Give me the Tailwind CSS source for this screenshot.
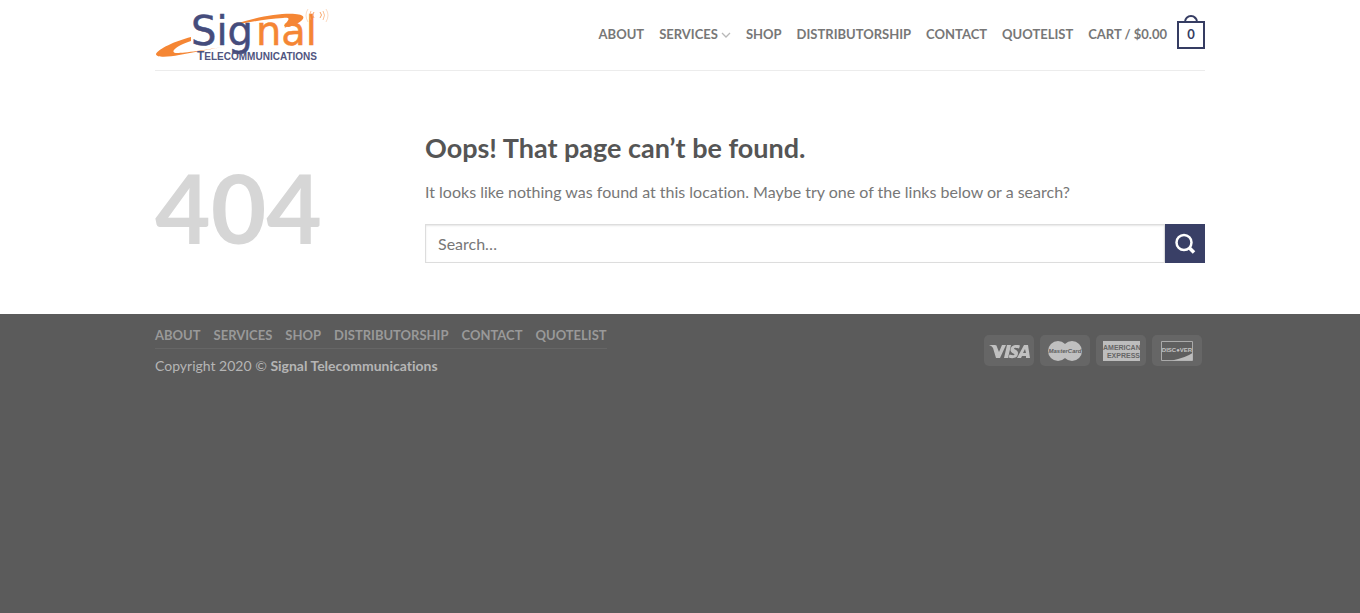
<!DOCTYPE html>
<html lang="en">
<head>
<meta charset="utf-8">
<meta name="viewport" content="width=device-width, initial-scale=1">
<title>Page not found – Signal Telecommunications</title>
<script src="https://cdn.jsdelivr.net/npm/@tailwindcss/browser@4"></script>
</head>
<body class="flex min-h-screen flex-col bg-[#5b5b5b] font-['Lato',sans-serif] text-base text-[#777] [font-variant-ligatures:none]">
<div class="bg-white">
  <header class="mx-auto max-w-[1080px] px-[15px]">
    <div class="flex h-[71px] items-center justify-between border-b border-[#ececec]">
      <a href="#" aria-label="Signal Telecommunications" class="block">
        <svg class="block" width="178" height="70" viewBox="0 0 178 70">
          <path d="M78 25 C100 17 125 13 140 14 C155 15 148 22 134 27 L129 26 C132 21 138 17 128 18 C112 19 95 22 78 25Z" fill="#f58634"/>
          <path d="M36 37 C20 41 3 49 1 54 C1 58 14 57 24 55 L73 46 C50 50 30 53 22 53 C14 53 20 46 36 41Z" fill="#f58634"/>
          <text x="36" y="45" font-family="DejaVu Sans" font-size="40" fill="#454c7c" stroke="#454c7c" stroke-width=".5">Sig</text>
          <text x="101" y="45" font-family="DejaVu Sans" font-size="40" fill="#f58634" stroke="#f58634" stroke-width=".5">nal</text>
          <g fill="none" stroke="#f8a568" stroke-width="1">
            <path d="M159 12 Q156 15 159 18 M165 12 Q168 15 165 18"/>
            <path d="M156 11 Q153 15 156 20 M168 11 Q171 15 168 20" opacity=".7"/>
            <path d="M153 9 Q149 15 153 22 M171 9 Q175 15 171 22" opacity=".4"/>
          </g>
          <text x="42" y="60" font-family="Liberation Sans" font-weight="700" font-size="12" fill="#50557f">T<tspan font-size="10">ELECOMMUNICATIONS</tspan></text>
        </svg>
      </a>
      <nav aria-label="Main" class="flex items-center gap-[15px] text-[13px] font-bold whitespace-nowrap text-[#777]">
        <a href="#">ABOUT</a>
        <a href="#" class="flex items-center gap-[3px]">SERVICES
          <svg width="10" height="6" viewBox="0 0 10 6" fill="none" stroke="#b8b8b8" stroke-width="1.3"><path d="M1 1l4 4 4-4"/></svg>
        </a>
        <a href="#">SHOP</a>
        <a href="#">DISTRIBUTORSHIP</a>
        <a href="#">CONTACT</a>
        <a href="#">QUOTELIST</a>
        <a href="#" class="flex items-center gap-[10px]">CART / $0.00
          <span class="relative flex size-7 items-center justify-center border-2 border-[#353c62] text-[#353c62]">
            <span class="absolute -top-2 left-1/2 h-2 w-[14px] -translate-x-1/2 rounded-t-full border-2 border-b-0 border-[#353c62]"></span>0
          </span>
        </a>
      </nav>
    </div>
  </header>
  <main class="mx-auto flex max-w-[1080px] px-[15px] pt-[59px] pb-[51px]">
    <div class="w-[270px] shrink-0 pt-[21px] text-[96px] leading-[112px] font-bold text-[#d6d6d6]">404</div>
    <div class="min-w-0 flex-1">
      <h1 class="text-[27px] leading-9 font-bold text-[#555]">Oops! That page can’t be found.</h1>
      <p class="mt-[13px] leading-[26px]">It looks like nothing was found at this location. Maybe try one of the links below or a search?</p>
      <form class="mt-[19px] flex" role="search">
        <input type="search" aria-label="Search" placeholder="Search…" class="h-[39px] min-w-0 flex-1 border border-[#ddd] px-3 text-base text-[#333] shadow-[inset_0_1px_2px_rgba(0,0,0,0.1)] outline-none placeholder:text-[#777]">
        <button type="submit" aria-label="Submit" class="flex h-[39px] w-10 items-center justify-center bg-[#393f66]">
          <svg width="22" height="22" viewBox="0 0 22 22" fill="none" stroke="#fff"><circle cx="10" cy="9.500" r="7.500" stroke-width="2.500"/><path d="M15.500 15l4.500 4.500" stroke-width="3.500"/></svg>
        </button>
      </form>
    </div>
  </main>
</div>
<footer class="mx-auto flex w-full max-w-[1080px] items-start justify-between px-[15px] pt-[10px]">
  <div>
    <nav aria-label="Footer" class="flex h-[25px] items-center gap-[13px] border-b border-[#666] text-[13px] font-bold whitespace-nowrap text-[#999]">
      <a href="#">ABOUT</a>
      <a href="#">SERVICES</a>
      <a href="#">SHOP</a>
      <a href="#">DISTRIBUTORSHIP</a>
      <a href="#">CONTACT</a>
      <a href="#">QUOTELIST</a>
    </nav>
    <div class="mt-[5px] text-sm leading-6 text-[#b5b5b5]">Copyright 2020 © <strong class="font-bold">Signal Telecommunications</strong></div>
  </div>
  <div class="mt-[11px] mr-[3px] flex gap-[6px]">
    <div class="flex h-[31px] w-[50px] items-center justify-center rounded-[5px] bg-[#666]">
      <svg width="50" height="31" viewBox="0 0 50 31" role="img" aria-label="Visa" fill="#c0c0c0"><path d="M5 10h6q2 0 2 2l2 5 3-7h4l-6 13h-4l-3-10q-1-2-4-3zM23 10h4l-3 13h-4zM36 10.500l-1 3q-5-1.500-5 0c0 1 4 1.500 4 4.500 0 5-5 6-9.500 4.500l1-3q5 1.500 5 0c0-1-4-1.500-4-4.500 0-4 4-6 9.500-4.500zM40 10h4l2 13h-4v-2h-4l-1 2h-4zM41 14l-2 4h3z"/></svg>
    </div>
    <div class="flex h-[31px] w-[50px] items-center justify-center rounded-[5px] bg-[#666]">
      <svg width="50" height="31" viewBox="0 0 50 31"><g fill="#c0c0c0"><circle cx="18" cy="16" r="10"/><circle cx="32" cy="16" r="10"/></g><text x="25" y="18" text-anchor="middle" font-family="Liberation Sans" font-weight="700" font-style="italic" font-size="6" fill="#5f5f5f">MasterCard</text></svg>
    </div>
    <div class="flex h-[31px] w-[50px] items-center justify-center rounded-[5px] bg-[#666]">
      <svg width="50" height="31" viewBox="0 0 50 31"><path fill="#bdbdbd" d="M7 6h37v20H7z"/><g font-family="Liberation Sans" font-weight="700" font-size="7" fill="#666"><text x="7" y="15">AMERICAN</text><text x="44" y="23" text-anchor="end">EXPRESS</text></g></svg>
    </div>
    <div class="flex h-[31px] w-[50px] items-center justify-center rounded-[5px] bg-[#666]">
      <svg width="50" height="31" viewBox="0 0 50 31"><path fill="#5f5f5f" stroke="#aaa" d="M9.500 6.500h31v19h-31z"/><path fill="#bdbdbd" d="M20 25.500Q33 23 40.500 18v7.500z"/><text x="25" y="17" text-anchor="middle" font-family="Liberation Sans" font-weight="700" font-size="6" fill="#c4c4c4">DISC●VER</text></svg>
    </div>
  </div>
</footer>
</body>
</html>
